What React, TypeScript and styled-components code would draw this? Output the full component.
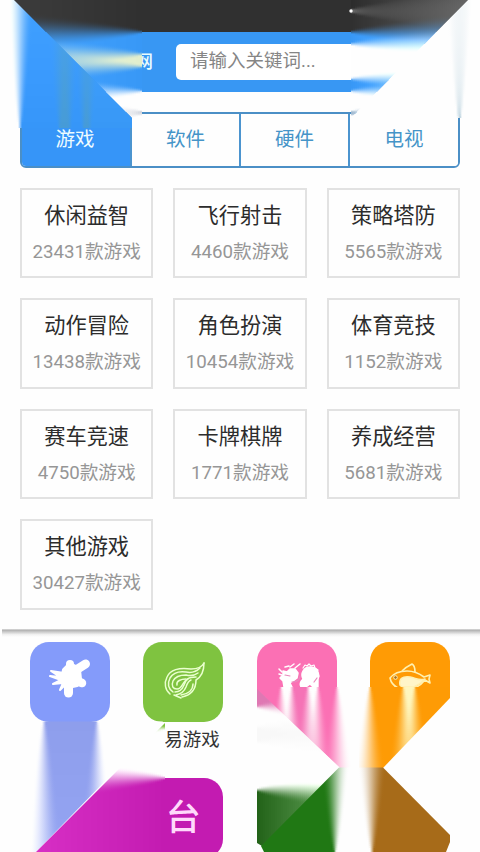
import React from 'react';
import styled, { createGlobalStyle } from 'styled-components';

const GlobalStyle = createGlobalStyle`
  * { box-sizing: border-box; }
  body {
    margin: 0;
    background: #fefefe;
    font-family: Roboto, "Noto Sans CJK SC", sans-serif;
  }
`;

const Page = styled.main`
  position: relative;
  width: 480px;
  height: 852px;
  overflow: hidden;
  background: #fefefe;
`;

const StatusBar = styled.div`
  height: 32px;
  background: #303030;
`;

const Header = styled.header`
  display: flex;
  align-items: center;
  height: 60px;
  padding-left: 135px;
  background: #3897f3;
`;

const SiteName = styled.div`
  width: 18px;
  margin-right: 23px;
  color: #e8fbff;
  font-size: 18px;
  font-weight: 500;
  line-height: 24px;
  white-space: nowrap;
`;

const SearchField = styled.div`
  flex: 1;
  height: 36px;
  margin-bottom: 1px;
  padding-left: 14px;
  border-radius: 5px 0 0 5px;
  background: #fff;
  color: #858585;
  font-size: 18.5px;
  line-height: 34px;
`;

const Tabs = styled.nav`
  display: grid;
  grid-template-columns: 108px 109px 109px 1fr;
  height: 56px;
  margin: 20px 20px 0;
  border: 2px solid #4b8fc6;
  border-radius: 6px;
  overflow: hidden;
`;

const Tab = styled.div<{ $active?: boolean }>`
  display: flex;
  align-items: center;
  justify-content: center;
  margin: ${p => (p.$active ? '-1px 0 -1px -2px' : '0')};
  padding-bottom: 1px;
  border-left: ${p => (p.$active ? '0' : '2px solid #4b94cf')};
  background: ${p => (p.$active ? '#3695f8' : '#fefefe')};
  color: ${p => (p.$active ? '#effcff' : '#4594c8')};
  font-size: 19.5px;
  line-height: 28px;
`;

const CategoryGrid = styled.section`
  display: grid;
  grid-template-columns: repeat(3, 1fr);
  grid-auto-rows: 90.5px;
  gap: 20px;
  height: 461px;
  padding: 19.5px 20px 0;
`;

const Card = styled.article`
  display: flex;
  flex-direction: column;
  align-items: center;
  padding-top: 10px;
  border: 2px solid #e2e2e2;
`;

const CardTitle = styled.div`
  color: #2c2c2c;
  font-size: 21.2px;
  line-height: 32px;
`;

const CardCount = styled.div`
  margin-top: 5px;
  color: #969696;
  font-size: 18.7px;
  line-height: 30px;
  white-space: nowrap;
`;

const Divider = styled.div`
  height: 8px;
  margin-left: 2px;
  background: linear-gradient(#dcdcdc, #b5b5b5 18%, #cdcdcd 38%, #f2f2f2 70%, #fefefe);
`;

const AppGrid = styled.section`
  display: grid;
  grid-template-columns: repeat(4, 80px);
  column-gap: 33.3px;
  padding: 5px 0 0 30px;
`;

const AppItem = styled.div`
  display: flex;
  flex-direction: column;
  height: 136px;
`;

const Tile = styled.div<{ $color: string; $flat?: boolean }>`
  display: flex;
  align-items: flex-start;
  justify-content: center;
  height: ${p => (p.$flat ? '45px' : '80px')};
  border-radius: ${p => (p.$flat ? '19px 19px 0 0' : '19px')};
  background: ${p => p.$color};
`;

const AppLabel = styled.div`
  padding-left: 21px;
  margin-top: 4px;
  color: #333;
  font-size: 18.5px;
  line-height: 28px;
  white-space: nowrap;
`;

const Glyph = styled.svg<{ $nudge?: number }>`
  width: 60px;
  height: 60px;
  flex: none;
  margin-top: 8px;
  margin-left: ${p => (p.$nudge ?? 0) * 2}px;
`;

const PlatformTile = styled.div`
  grid-column: 2;
  display: flex;
  justify-content: center;
  height: 80px;
  border-radius: 0 19px 19px 0;
  background: #c31bb1;
  color: #ffd9fb;
  font-size: 35px;
  font-weight: 500;
  line-height: 81px;
`;

/* Light beams that fade over the corners of the header and the launcher. */
const Beams = styled.svg`
  position: absolute;
  inset: 0;
  width: 480px;
  height: 852px;
  pointer-events: none;
`;

const categories: [string, number][] = [
  ['休闲益智', 23431], ['飞行射击', 4460], ['策略塔防', 5565],
  ['动作冒险', 13438], ['角色扮演', 10454], ['体育竞技', 1152],
  ['赛车竞速', 4750], ['卡牌棋牌', 1771], ['养成经营', 5681],
  ['其他游戏', 30427],
];

const SplashIcon = () => (
  <Glyph viewBox="0 0 60 60">
    <g fill="#fff" stroke="#fff" strokeLinecap="round" strokeLinejoin="round">
      <path d="M24 20l4-4h6l5 4 1 9-3 6-9 2-6-7z" strokeWidth="4" />
      <path d="M30 20v-6" strokeWidth="8" />
      <path d="M36 20l9.500-6" strokeWidth="9" />
      <path d="M35 30l7 3" strokeWidth="8.500" />
      <path d="M28.500 30v13" strokeWidth="9" />
      <path d="M24 23l-13-2 9 6-10-1 11 4-8 4 10-1-3 7 7-7" strokeWidth="2" />
    </g>
  </Glyph>
);

const FlameIcon = () => (
  <Glyph viewBox="0 0 60 60" $nudge={1.7}>
    <g fill="none" stroke="#eaffcf" strokeWidth="1.5" strokeLinecap="round" strokeLinejoin="round">
      <path d="M49 13c-2 4-7 6-13 6-12-2-21 1-24 8-3 6-2 13 3 17" />
      <path d="M49 13c0 9-3 14-8 17 0 9-5 15-14 17" />
      <path d="M45 18c-4 4-9 5-14 4-7-1-13 1-16 6-3 6-1 11 3 14" />
      <path d="M43 23c-4 3-8 3-12 2-6 0-11 2-13 6-2 5 0 8 4 8 6 0 5-8 11-10" />
      <path d="M41 27c-9 0-10 3-12 8-2 5-5 7-9 7" />
      <path d="M22 35c-1-4 4-6 9-6M36 30c-3 1-4 4-5 7-2 5-5 7-10 8M38 34c0 6-5 10-12 11M19 45l7 3" />
    </g>
  </Glyph>
);

const DragonIcon = () => (
  <Glyph viewBox="0 0 60 60" $nudge={3}>
    <g fill="#fff" stroke="#fff" strokeLinecap="round" strokeLinejoin="round">
      <path d="M13 21l4 1 3-3 5 0 3 4-1 5-4 3-3 2 2 4H14l-1-6-3-3 3-3z" strokeWidth="1.5" />
      <path d="M15 17l4-1M20 17l4-3M25 18l5-4M9 19l3 3M9 24l3 1" strokeWidth="1.5" />
      <path d="M31 37c-2-3 0-6 2-8-3-6 1-12 7-12 7 0 10 6 8 12v8h-5l-3-3-4 3z" strokeWidth="1.4" />
      <path d="M33 18l2-3 2 1 2-2 2 2 3-1 1 3 3 2-1 3 2 3-1 3" fill="none" strokeWidth="1.2" />
      <path d="M15 25l5 1M22 32c5 0 8-2 8-6M44 32l3-4" fill="none" stroke="#e88abc" strokeWidth="1.2" />
    </g>
  </Glyph>
);

const FishIcon = () => (
  <Glyph viewBox="0 0 60 60">
    <g stroke="#fff0b0" strokeWidth="1.6" strokeLinejoin="round" fill="none">
      <path d="M20 35c-1-6 2-9 10-8 6 1 9 4 15 2-3 3-7 6-11 8H22z" fill="#fff5c8" />
      <path d="M10 28c4-5 10-7 17-7 8 0 13 3 17 6l6-2-1 4 1 4-5-3c-3 4-6 6-10 8H18c-4-2-7-5-8-10z" />
      <path d="M22 21c3-3 6-5 10-7 2 1 3 4 3 8" />
    </g>
    <circle cx="15.500" cy="27.500" r="1.800" fill="#a56f24" stroke="#fff0b0" />
  </Glyph>
);

type Rgb = [number, number, number];
type Edge = [number, Rgb];

const WHITE: Rgb = [254, 254, 254];
const DARK: Rgb = [48, 48, 48];
const BLUE: Rgb = [56, 152, 246];
const SLATE: Rgb = [70, 120, 165];
const CREAM: Rgb = [255, 246, 190];
const PINK: Rgb = [251, 112, 180];
const ORANGE: Rgb = [255, 155, 5];
const GREEN: Rgb = [32, 120, 20];
const BROWN: Rgb = [167, 107, 25];
const PURPLE: Rgb = [195, 27, 177];
const LEAF: Rgb = [127, 195, 64];

const ramp = (t: number) => {
  const v = Math.max(0, Math.min(1, (t + 1) / 2));
  return v * v * (3 - 2 * v);
};

/* Colour at one point across a fan whose edges have spread by `soft`. */
const mix = (base: Rgb, edges: Edge[], at: number, soft: number, lift: number) => {
  const out = base.map(v => v + lift);
  let previous = base;
  for (const [place, color] of edges) {
    const k = ramp((at - place) / soft);
    for (let i = 0; i < 3; i++) out[i] += (color[i] - previous[i]) * k;
    previous = color;
  }
  return `rgb(${out.map(v => Math.min(254, Math.round(v))).join(',')})`;
};

interface FanProps {
  id: string;
  shape: string;
  horizontal?: boolean;
  origin: number;
  end: number;
  span: [number, number];
  spread: number;
  lift?: number;
  base: Rgb;
  edges: Edge[];
}

/* Colour bands that leave a sharp line at `origin` and soften towards `end`. */
const Fan = ({ id, shape, horizontal, origin, end, span, spread, lift = 0, base, edges }: FanProps) => {
  const start = Math.min(origin, end);
  const length = Math.abs(end - origin);
  const count = Math.ceil(length / 2);
  const [from, to] = span;
  const samples = Math.ceil((to - from) / 2);
  return (
    <>
      <clipPath id={`${id}-clip`}><path d={shape} /></clipPath>
      <g clipPath={`url(#${id}-clip)`}>
        {Array.from({ length: count }, (_, n) => {
          const place = start + n * 2;
          const distance = Math.abs(place + 1 - origin);
          const soft = 0.8 + spread * Math.pow(distance, 0.65);
          const brighten = (lift * distance) / length;
          const gradient = `${id}-${n}`;
          return (
            <React.Fragment key={n}>
              <linearGradient
                id={gradient}
                gradientUnits="userSpaceOnUse"
                x1={horizontal ? 0 : from}
                x2={horizontal ? 0 : to}
                y1={horizontal ? from : 0}
                y2={horizontal ? to : 0}
              >
                {Array.from({ length: samples + 1 }, (_, s) => (
                  <stop
                    key={s}
                    offset={s / samples}
                    stopColor={mix(base, edges, from + ((to - from) * s) / samples, soft, brighten)}
                  />
                ))}
              </linearGradient>
              <rect
                x={horizontal ? place : from}
                y={horizontal ? from : place}
                width={horizontal ? 2 : to - from}
                height={horizontal ? to - from : 2}
                fill={`url(#${gradient})`}
                shapeRendering="crispEdges"
              />
            </React.Fragment>
          );
        })}
      </g>
    </>
  );
};

const fans: FanProps[] = [
  {
    id: 'header-left', shape: 'M14 0H142V117H134L132 118Z', horizontal: true,
    origin: 142, end: 14, span: [0, 126], spread: 0.85, lift: 12, base: DARK,
    edges: [[32, BLUE], [54, [226, 238, 205]], [67, BLUE], [91, WHITE], [112, [150, 160, 180]], [113.5, WHITE]],
  },
  {
    id: 'tab-left', shape: 'M0 0H14L132 118V128H0Z',
    origin: 128, end: 0, span: [0, 134], spread: 0.55, lift: 10, base: WHITE,
    edges: [[20, [54, 150, 249]], [59, [70, 155, 215]], [70, [54, 150, 248]], [83, [70, 155, 215]], [90, BLUE]],
  },
  {
    id: 'header-right', shape: 'M351 0H468L351 118Z', horizontal: true,
    origin: 351, end: 469, span: [0, 120], spread: 0.85, lift: 50, base: [44, 44, 44],
    edges: [[10.3, [200, 200, 200]], [11.7, DARK], [32, BLUE], [44, WHITE], [79, BLUE], [91, WHITE], [112, SLATE], [114, WHITE]],
  },
  {
    id: 'tab-right', shape: 'M468 0H480V118H351Z',
    origin: 118, end: 0, span: [350, 480], spread: 0.5, base: WHITE,
    edges: [[458.8, [110, 160, 185]], [460, WHITE]],
  },
  {
    id: 'periwinkle', shape: 'M28 721.500H163L36 852H28Z',
    origin: 721, end: 853, span: [20, 164], spread: 0.72, lift: 6, base: WHITE,
    edges: [[44, [142, 158, 236]], [97, WHITE]],
  },
  {
    id: 'violet', shape: 'M36 852L165 723V852Z', horizontal: true,
    origin: 165, end: 35, span: [722, 852], spread: 1, lift: 20, base: LEAF,
    edges: [[728, WHITE], [778, PURPLE]],
  },
  {
    id: 'rose', shape: 'M257 687H359V768H340L257 690Z',
    origin: 687, end: 769, span: [250, 360], spread: 0.8, base: PINK,
    edges: [[281, WHITE], [292, [245, 115, 182]], [308, WHITE], [318, PINK], [337, WHITE]],
  },
  {
    id: 'rose-side', shape: 'M257 689L340 768H257Z', horizontal: true,
    origin: 257, end: 341, span: [686, 770], spread: 1, base: [223, 120, 179],
    edges: [[707, WHITE], [727, [248, 248, 248]], [742, WHITE]],
  },
  {
    id: 'amber', shape: 'M359 687H450V698L383 768H359Z',
    origin: 687, end: 769, span: [350, 460], spread: 0.8, base: WHITE,
    edges: [[370, ORANGE], [403, CREAM], [415, ORANGE]],
  },
  {
    id: 'forest-side', shape: 'M257 768H340L262 846L257 843Z', horizontal: true,
    origin: 257, end: 341, span: [766, 850], spread: 1.1, lift: 70, base: WHITE,
    edges: [[790, [34, 98, 24]]],
  },
  {
    id: 'forest', shape: 'M339 767.500H359V852H264L261 846Z',
    origin: 852, end: 766, span: [250, 360], spread: 0.75, base: GREEN,
    edges: [[335, WHITE]],
  },
  {
    id: 'bronze', shape: 'M358.500 767.500H383L450 835V842L446 852H358.500Z',
    origin: 852, end: 766, span: [350, 456], spread: 0.75, base: WHITE,
    edges: [[372, BROWN]],
  },
];

const BeamLayer = () => (
  <Beams viewBox="0 0 480 852">
    {fans.map(fan => <Fan key={fan.id} {...fan} />)}
    <circle cx="351" cy="11" r="1.700" fill="#fff" />
  </Beams>
);

export default function App() {
  return (
    <>
      <GlobalStyle />
      <Page>
        <StatusBar />
        <Header>
          <SiteName>网</SiteName>
          <SearchField>请输入关键词...</SearchField>
        </Header>
        <Tabs>
          <Tab $active>游戏</Tab><Tab>软件</Tab><Tab>硬件</Tab><Tab>电视</Tab>
        </Tabs>
        <CategoryGrid>
          {categories.map(([title, count]) => (
            <Card key={title}>
              <CardTitle>{title}</CardTitle>
              <CardCount>{count}款游戏</CardCount>
            </Card>
          ))}
        </CategoryGrid>
        <Divider />
        <BeamLayer />
        <AppGrid>
          <AppItem><Tile $color="#849bfa"><SplashIcon /></Tile></AppItem>
          <AppItem><Tile $color="#7fc340"><FlameIcon /></Tile><AppLabel>易游戏</AppLabel></AppItem>
          <AppItem><Tile $color="#fb70b4" $flat><DragonIcon /></Tile></AppItem>
          <AppItem><Tile $color="#ff9b05" $flat><FishIcon /></Tile></AppItem>
          <PlatformTile>台</PlatformTile>
        </AppGrid>
      </Page>
    </>
  );
}
